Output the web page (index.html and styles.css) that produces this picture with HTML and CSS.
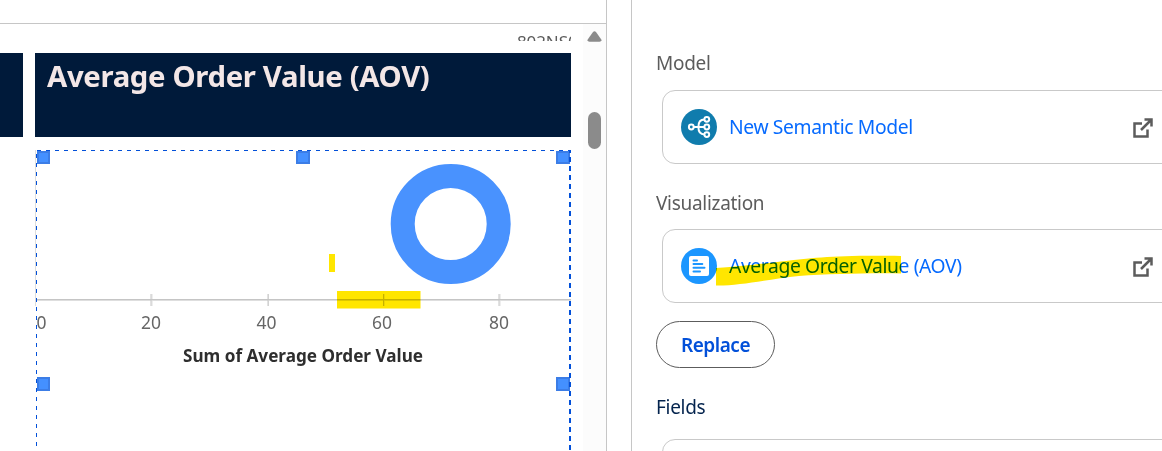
FILE: index.html
```html
<!DOCTYPE html>
<html lang="en">
<head>
<meta charset="utf-8">
<title>Average Order Value</title>
<link rel="stylesheet" href="styles.css">
</head>
<body>
<main class="app">
  <section class="workspace">
    <header class="toolbar"></header>
    <div class="stage">
      <div class="canvas">
        <div class="overflow-row"><span>802NS0</span></div>
        <div class="titles">
          <div class="title-block previous"></div>
          <h1 class="title-block"><span class="title-text">Average Order Value (AOV)</span></h1>
        </div>
        <svg class="chart" width="536" height="301" viewBox="35 150 536 301">
          <path d="M35.5 150V306" stroke="#dcdcdc"/>
          <g class="axis">
            <path class="soft" d="M37 300.5H571M152 294v12M268.500 294v12M384 294v12M500 294v12"/>
            <path d="M37 299.500H571M151 294v12M268 294v12M383.500 294v12M499 294v12"/>
          </g>
          <g class="labels">
            <text x="36.500" y="329" textLength="10" lengthAdjust="spacingAndGlyphs">0</text>
            <text x="141" y="329" textLength="20" lengthAdjust="spacingAndGlyphs">20</text>
            <text x="256.500" y="329" textLength="20" lengthAdjust="spacingAndGlyphs">40</text>
            <text x="372" y="329" textLength="20" lengthAdjust="spacingAndGlyphs">60</text>
            <text x="489" y="329" textLength="20" lengthAdjust="spacingAndGlyphs">80</text>
          </g>
          <text class="axis-title" x="183" y="362" textLength="240" lengthAdjust="spacingAndGlyphs">Sum of Average Order Value</text>
          <circle cx="450.700" cy="224" r="48" fill="none" stroke="#4992fe" stroke-width="24"/>
          <g class="marker">
            <rect x="329" y="254" width="6" height="18"/>
            <rect x="337" y="291" width="83.500" height="17.500"/>
          </g>
          <g class="handles">
            <rect x="38" y="152" width="11" height="11"/>
            <rect x="297" y="152" width="12" height="11"/>
            <rect x="557" y="152" width="12" height="11"/>
            <rect x="38" y="378" width="11" height="12"/>
            <rect x="557" y="378" width="12" height="12"/>
          </g>
          <g class="selection">
            <path d="M37 150.500H571" stroke-dasharray="4 5"/>
            <path d="M36.500 154V451" stroke-dasharray="4 5"/>
            <path d="M570 148V451" stroke-width="2" stroke-dasharray="5 4"/>
          </g>
        </svg>
      </div>
      <div class="scrollbar">
        <svg width="15" height="11" viewBox="0 0 15 11"><path d="M6 1Q7.500-.6 9 1L14.300 8.500Q15 10.700 12.500 10.700H2.500Q0 10.700.7 8.500Z" fill="#8b8b8b"/></svg>
        <div class="thumb"></div>
      </div>
    </div>
  </section>
  <aside class="panel">
    <h2 class="label"><span class="t-model">Model</span></h2>
    <div class="card">
      <svg class="badge" width="36" height="36" viewBox="0 0 36 36">
        <circle cx="18" cy="18" r="18" fill="#107cad"/>
        <g fill="none" stroke="#fff" stroke-width="2">
          <circle cx="10.300" cy="18" r="2.400"/><circle cx="25.800" cy="10.300" r="2.400"/><circle cx="25.800" cy="18" r="2.400"/><circle cx="25.800" cy="25.600" r="2.400"/>
          <path d="M12.700 18H23.400M23.400 10.600C19.500 10.600 17.400 13.400 17.400 18s2.100 7.400 6 7.400"/>
        </g>
      </svg>
      <a class="link t-semantic">New Semantic Model</a>
      <svg class="open" width="22" height="22" viewBox="0 0 22 22"><path d="M10 6.500H2.500V19.500H15.500V12.500M9 13L18.500 3.500M12.500 2.500H19.500V9.500"/></svg>
    </div>
    <h2 class="label second"><span class="t-visual">Visualization</span></h2>
    <div class="card">
      <svg class="badge" width="36" height="36" viewBox="0 0 36 36">
        <circle cx="18" cy="18" r="18" fill="#1b96ff"/>
        <rect x="8" y="8" width="20" height="20" rx="2" fill="#fff"/>
        <path d="M12.500 12.600H16M12.500 16H21.300M12.500 19.800H23.500M12.500 23.500H19" stroke="#1b96ff" stroke-width="2" stroke-linecap="round"/>
      </svg>
      <a class="link t-aov">Average Order Value (AOV)</a>
      <svg class="open" width="22" height="22" viewBox="0 0 22 22"><path d="M10 6.500H2.500V19.500H15.500V12.500M9 13L18.500 3.500M12.500 2.500H19.500V9.500"/></svg>
      <svg class="highlight" width="186" height="32" viewBox="0 0 186 32"><path d="M0 13C28 11 44 9 65 6.500C98 3 118 0 185 1V18.500C153 18 113 19 83 21C53 24 23 31 0 30.500Z"/></svg>
    </div>
    <button class="replace"><span class="t-replace">Replace</span></button>
    <h2 class="label fields"><span class="t-fields">Fields</span></h2>
    <div class="card"></div>
  </aside>
</main>
</body>
</html>
```

FILE: styles.css
```css
* { box-sizing: border-box; }
body { margin: 0; background: #fff; font-family: "Noto Sans", "Open Sans", sans-serif; }
.app { display: flex; gap: 24px; width: 1162px; height: 451px; overflow: hidden; }
.workspace { display: flex; flex-direction: column; width: 607px; flex: none; border-right: 1px solid #c6c6c6; }
.toolbar { height: 24px; flex: none; border-bottom: 1px solid #c6c6c6; }
.stage { display: flex; height: 427px; }
.canvas { width: 583px; flex: none; }
.overflow-row { height: 17px; padding: 9px 12px 0 0; overflow: hidden; display: flex; justify-content: flex-end; font-size: 17px; line-height: 17px; color: #5c5c5c; }
.overflow-row span { width: 54px; height: 8px; overflow: hidden; letter-spacing: -.1px; }
.titles { display: flex; gap: 12px; padding-top: 12px; }
.title-block { width: 536px; height: 84px; margin: 0; padding: 2px 12px; background: #001a3a; color: #f3e7e7; font-size: 29.3px; line-height: 42px; font-weight: 700; white-space: nowrap; }
.title-block.previous { width: 23px; flex: none; padding: 0; }
.title-text { letter-spacing: -.34px; }
.chart { display: block; margin: 13px 0 0 35px; }
.axis path { fill: none; stroke: #c5c5c5; stroke-width: 1; }
.axis .soft { stroke: #dedede; }
.labels { font-size: 17.5px; fill: #666; }
.axis-title { font-size: 17.3px; font-weight: 700; fill: #2e2e2e; }
.marker { fill: #ffe600; mix-blend-mode: multiply; }
.handles rect { fill: #4490ff; stroke: #3c7de6; stroke-width: 2; }
.selection path { fill: none; stroke: #0250d9; }
.scrollbar { width: 23px; padding: 7px 0 0 4px; background: #fcfcfc; }
.scrollbar svg { display: block; }
.thumb { width: 13px; height: 37px; margin: 70px 0 0 1px; border-radius: 7px; background: #8b8b8b; }
.panel { flex: 1; min-width: 0; padding: 48px 0 0 24px; border-left: 1px solid #c6c6c6; }
.label { margin: 0; height: 30px; font-size: 19px; line-height: 30px; font-weight: 400; color: #5c5c5c; white-space: nowrap; letter-spacing: -.3px; }
.card { position: relative; display: flex; align-items: center; width: 530px; height: 74px; margin: 12px 0 0 6px; padding: 0 0 0 18px; border: 1px solid #c9c9c9; border-radius: 13px; }
.badge { flex: none; margin-right: 12px; }
.link { width: 403px; flex: none; font-size: 19.3px; line-height: 30px; color: #066afe; white-space: nowrap; letter-spacing: -.38px; }
.open { flex: none; margin-top: 1px; fill: none; stroke: #5c5c5c; stroke-width: 2.5; }
.highlight { position: absolute; left: 53px; top: 25px; fill: #ffe600; mix-blend-mode: multiply; }
.second { margin-top: 24px; }
.second + .card { margin-top: 11px; }
.replace { display: block; width: 119px; height: 47px; margin: 18px 0 0; padding: 1px 0 0 24px; border: 1px solid #5c5c5c; border-radius: 24px; background: #fff; color: #0250d9; font: 600 19px/44px "Noto Sans", "Open Sans", sans-serif; letter-spacing: -.48px; text-align: left; }
.fields { margin-top: 24px; color: #03234d; }
.fields + .card { margin-top: 17px; }
```
